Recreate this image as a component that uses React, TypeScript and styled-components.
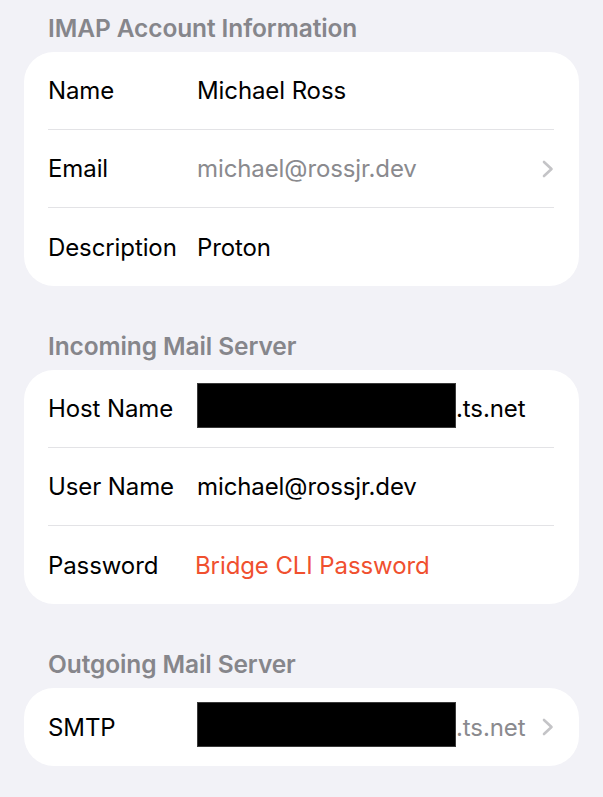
import styled, { createGlobalStyle } from "styled-components";

const GlobalStyle = createGlobalStyle`
    html, body {
        margin: 0;
        padding: 0;
        background-color: #f2f2f7;
        font-family: Inter, "Noto Sans", sans-serif;
        -webkit-font-smoothing: antialiased;
    }
`;

const Page = styled.div`
    display: flex;
    flex-direction: column;
    gap: 45px;
    padding: 13px 24px 0 24px;
`;

const Section = styled.section`
    display: flex;
    flex-direction: column;
    gap: 9px;
`;

const SectionTitle = styled.h2`
    margin: 0;
    padding-left: 24px;
    height: 30px;
    line-height: 30px;
    font-size: 24.5px;
    font-weight: 600;
    color: #86868b;
    letter-spacing: -0.1px;
`;

const Card = styled.div`
    background-color: #ffffff;
    border-radius: 30px;
    padding: 0 25px 0 24px;
`;

const Row = styled.div`
    display: grid;
    grid-template-columns: 149px 1fr auto;
    align-items: center;
    height: 78px;
    box-sizing: border-box;
    border-bottom: 1px solid #e3e3e6;

    &:last-child {
        border-bottom: none;
    }
`;

const Label = styled.span`
    font-size: 24px;
    color: #000000;
    letter-spacing: -0.1px;
`;

const Value = styled.span<{ $tone?: "plain" | "muted" | "alert" }>`
    display: flex;
    align-items: center;
    font-size: 24px;
    letter-spacing: -0.1px;
    color: ${({ $tone }) =>
        $tone === "muted" ? "#8a8a8e" : $tone === "alert" ? "#f0502f" : "#000000"};
    margin-left: ${({ $tone }) => ($tone === "alert" ? "-2px" : "0")};
`;

const Redacted = styled.span`
    display: inline-block;
    flex-shrink: 0;
    width: 259px;
    height: 45px;
    background-color: #000000;
    border: 1px solid #3a3a3a;
    box-sizing: border-box;
    margin-top: -6px;
`;

const Chevron = () => (
    <svg width="12" height="18" viewBox="0 0 12 18" fill="none">
        <path d="M2 2 L9.5 9 L2 16" stroke="#c4c4c7" strokeWidth="2.6" strokeLinecap="round" strokeLinejoin="round" />
    </svg>
);

const App = () => {
    return (
        <>
            <GlobalStyle />
            <Page>
                <Section>
                    <SectionTitle>IMAP Account Information</SectionTitle>
                    <Card>
                        <Row>
                            <Label>Name</Label>
                            <Value>Michael Ross</Value>
                        </Row>
                        <Row>
                            <Label>Email</Label>
                            <Value $tone="muted">michael@rossjr.dev</Value>
                            <Chevron />
                        </Row>
                        <Row>
                            <Label>Description</Label>
                            <Value>Proton</Value>
                        </Row>
                    </Card>
                </Section>

                <Section>
                    <SectionTitle>Incoming Mail Server</SectionTitle>
                    <Card>
                        <Row>
                            <Label>Host Name</Label>
                            <Value>
                                <Redacted />
                                .ts.net
                            </Value>
                        </Row>
                        <Row>
                            <Label>User Name</Label>
                            <Value>michael@rossjr.dev</Value>
                        </Row>
                        <Row>
                            <Label>Password</Label>
                            <Value $tone="alert">Bridge CLI Password</Value>
                        </Row>
                    </Card>
                </Section>

                <Section>
                    <SectionTitle>Outgoing Mail Server</SectionTitle>
                    <Card>
                        <Row>
                            <Label>SMTP</Label>
                            <Value $tone="muted">
                                <Redacted />
                                .ts.net
                            </Value>
                            <Chevron />
                        </Row>
                    </Card>
                </Section>
            </Page>
        </>
    );
};

export default App;
